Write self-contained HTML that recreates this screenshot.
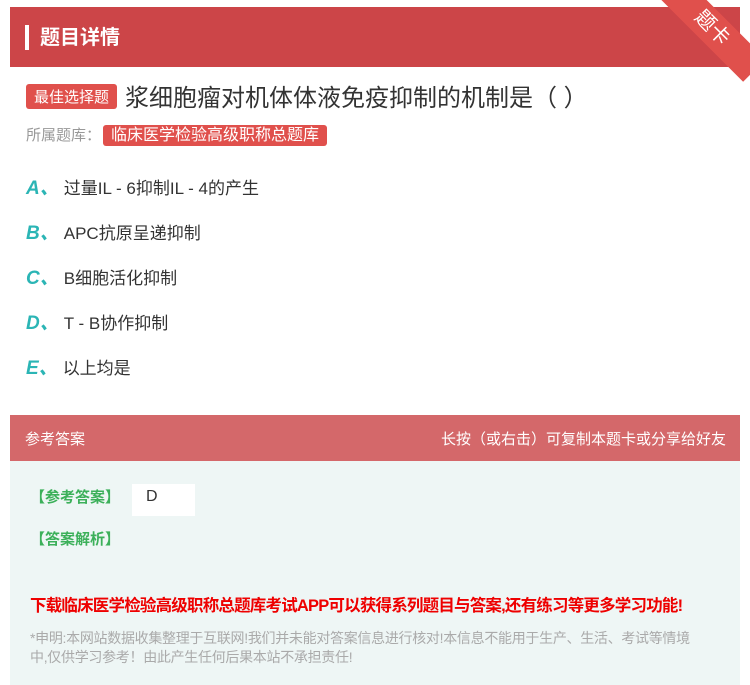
<!DOCTYPE html>
<html><head><meta charset="utf-8"><style>
*{margin:0;padding:0;box-sizing:border-box}
body{width:750px;height:685px;background:#fff;font-family:"Liberation Sans","Noto Sans CJK SC",sans-serif;position:relative;overflow:hidden}
.hd{position:absolute;left:10px;top:7px;width:730px;height:60px;background:#cc4548}
.hd .bar{position:absolute;left:15px;top:18px;width:4px;height:25px;background:#fff}
.hd .t{position:absolute;left:30px;top:14px;color:#fff;font-size:20px;font-weight:bold}
.rib{position:absolute;width:120px;height:32px;background:#e0504c;transform:rotate(45deg);color:#fff;font-size:20px;text-align:center;line-height:32px;top:12px;right:-22px}
.q{position:absolute;left:26px;top:78px;font-size:24px;color:#333}
.tag{display:inline-block;background:#e0504c;color:#fff;font-size:15px;padding:2px 8px;border-radius:3px;vertical-align:4px;margin-right:8px}
.lib{position:absolute;left:26px;top:121px;font-size:15px;color:#999}
.lib span{background:#e0504c;color:#fff;padding:2px 8px;border-radius:3px;margin-left:2px;font-size:16px}
.opt{position:absolute;left:26px;font-size:17px;color:#333}
.opt b{color:#2bb5b5;font-style:italic;font-size:19px;margin-right:5px}
.ah{position:absolute;left:10px;top:415px;width:730px;height:46px;background:#d4686a;color:#fff;font-size:15px}
.ab{position:absolute;left:10px;top:461px;width:730px;height:224px;background:#eef6f5}
.g{color:#3cb05a;font-size:15px;font-weight:bold;position:absolute}
.red{position:absolute;left:30px;top:592px;color:#e00;font-size:16.5px;font-weight:bold;letter-spacing:-0.8px;white-space:nowrap}
.note{position:absolute;left:30px;top:629px;color:#aaa;font-size:14px;line-height:19px;width:672px;letter-spacing:-0.3px}
</style></head><body>
<div class="hd"><div class="bar"></div><div class="t">题目详情</div></div>
<div class="rib">题卡</div>
<div class="q"><span class="tag">最佳选择题</span>浆细胞瘤对机体体液免疫抑制的机制是（ ）</div>
<div class="lib">所属题库：<span>临床医学检验高级职称总题库</span></div>
<div class="opt" style="top:173px"><b>A、</b>过量IL - 6抑制IL - 4的产生</div>
<div class="opt" style="top:218px"><b>B、</b>APC抗原呈递抑制</div>
<div class="opt" style="top:263px"><b>C、</b>B细胞活化抑制</div>
<div class="opt" style="top:308px"><b>D、</b>T - B协作抑制</div>
<div class="opt" style="top:353px"><b>E、</b>以上均是</div>
<div class="ah"><span style="position:absolute;left:15px;top:13px">参考答案</span><span style="position:absolute;right:14px;top:13px">长按（或右击）可复制本题卡或分享给好友</span></div>
<div class="ab"></div>
<div class="g" style="left:30px;top:486px">【参考答案】</div>
<div style="position:absolute;left:132px;top:484px;width:63px;height:32px;background:#fff;font-size:16px;padding:4px 14px;color:#333">D</div>
<div class="g" style="left:30px;top:528px">【答案解析】</div>
<div class="red">下载临床医学检验高级职称总题库考试APP可以获得系列题目与答案,还有练习等更多学习功能!</div>
<div class="note">*申明:本网站数据收集整理于互联网!我们并未能对答案信息进行核对!本信息不能用于生产、生活、考试等情境中,仅供学习参考！由此产生任何后果本站不承担责任!</div>
</body></html>
